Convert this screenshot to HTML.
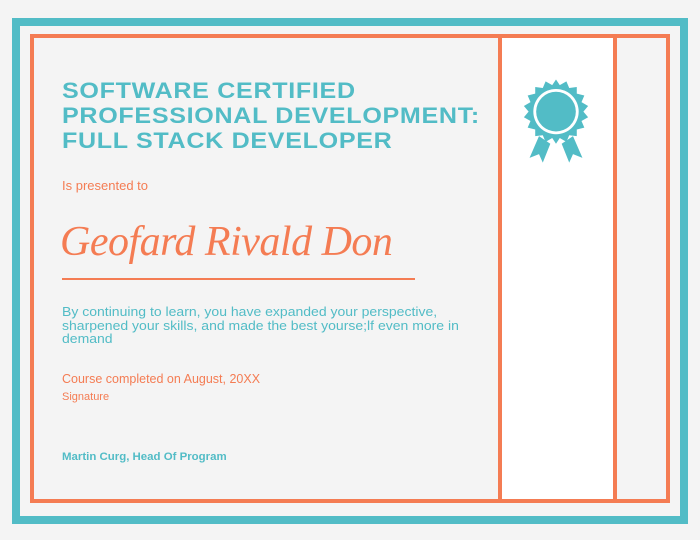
<!DOCTYPE html>
<html><head><style>
*{margin:0;padding:0;box-sizing:border-box}
body{width:700px;height:540px;background:#f4f4f4;position:relative;overflow:hidden;font-family:"Liberation Sans",sans-serif}
.a{position:absolute}
.t{color:#52bcc6}.o{color:#f47c53}
</style></head><body>
<div class="a" style="left:12px;top:18px;width:676px;height:506px;border:8px solid #52bcc6"></div>
<div class="a" style="left:30px;top:34px;width:640px;height:469px;border:4px solid #f47c53"></div>
<div class="a" style="left:498px;top:34px;width:119px;height:469px;border:4px solid #f47c53;background:#fff"></div>
<svg class="a" style="left:522px;top:78px" width="68" height="88" viewBox="0 0 72 90">
<polygon fill="#52bcc6" points="36,0 40,6 47,2 50,9 58,8 58,15 66,17 63,24 70,28 65,34 70,40 63,44 66,51 58,53 58,60 50,59 47,66 40,62 36,68 32,62 25,66 22,59 14,60 14,53 6,51 9,44 2,40 7,34 2,28 9,24 6,17 14,15 14,8 22,9 25,2 32,6"/>
<circle cx="36" cy="34" r="24" fill="#fff"/><circle cx="36" cy="34" r="21" fill="#52bcc6"/>
<polygon fill="#52bcc6" points="18,60 30,68 22,88 18,79 8,83"/>
<polygon fill="#52bcc6" points="54,60 42,68 50,88 54,79 64,83"/>
</svg>
<div class="a t" style="left:62px;top:78px;font-weight:bold;font-size:22px;line-height:25px;letter-spacing:0.6px;transform:scaleX(1.14);transform-origin:left top;white-space:nowrap">SOFTWARE CERTIFIED<br>PROFESSIONAL DEVELOPMENT:<br>FULL STACK DEVELOPER</div>
<div class="a o" style="left:62px;top:178px;font-size:13px">Is presented to</div>
<div class="a o" style="left:60px;top:218px;font-family:'Liberation Serif',serif;font-style:italic;font-size:42px;letter-spacing:-0.5px">Geofard Rivald Don</div>
<div class="a" style="left:62px;top:278px;width:353px;height:2px;background:#f47c53"></div>
<div class="a t" style="left:62px;top:306px;font-size:12.5px;line-height:13.5px;transform:scaleX(1.12);transform-origin:left top;white-space:nowrap">By continuing to learn, you have expanded your perspective,<br>sharpened your skills, and made the best yourse;lf even more in<br>demand</div>
<div class="a o" style="left:62px;top:372px;font-size:12.5px">Course completed on August, 20XX</div>
<div class="a o" style="left:62px;top:391px;font-size:11px">Signature</div>
<div class="a t" style="left:62px;top:451px;font-size:11px;font-weight:bold;transform:scaleX(1.04);transform-origin:left top;white-space:nowrap">Martin Curg, Head Of Program</div>
</body></html>
